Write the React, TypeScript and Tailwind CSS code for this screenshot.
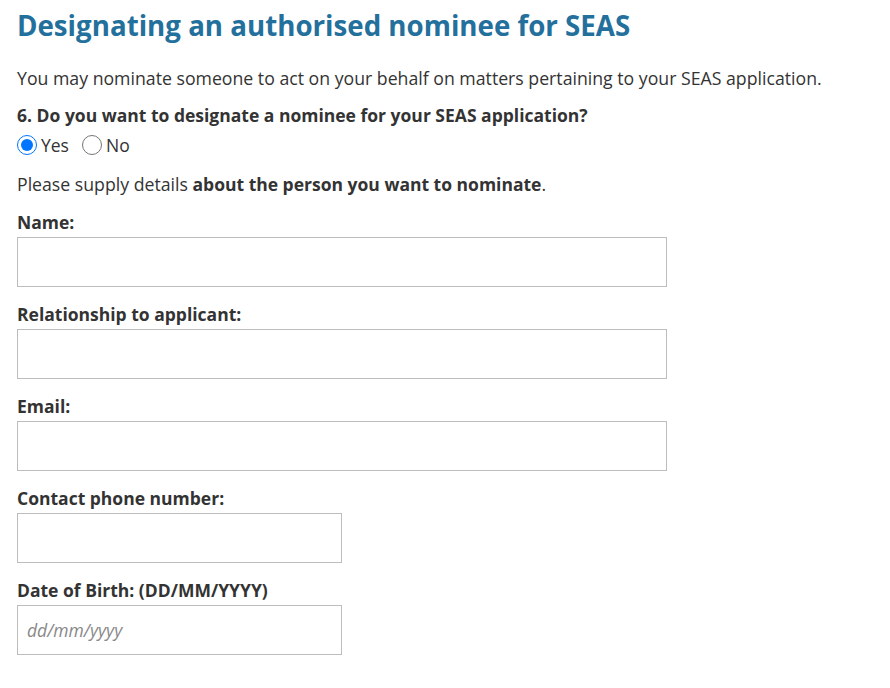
import React from "react";

const font = { fontFamily: '"Open Sans", "Noto Sans", sans-serif' };

function Field({ label, wide = true, placeholder }: { label: string; wide?: boolean; placeholder?: string }) {
  return (
    <div className="mt-[15px]">
      <label className="block text-[17.5px] font-bold leading-[24px] text-[#333]">{label}</label>
      <input
        type="text"
        placeholder={placeholder}
        className={`mt-[3px] block h-[50px] border border-[#bdbdbd] bg-white px-[9px] text-[17.5px] italic text-[#333] placeholder:text-[#888] outline-none ${wide ? "w-[650px]" : "w-[325px]"}`}
        style={font}
      />
    </div>
  );
}

export default function App() {
  return (
    <div className="min-h-[688px] w-[890px] bg-white px-[17px] pt-[6px] text-[#333]" style={font}>
      <h1 className="text-[27.7px] font-bold leading-[38px] text-[#24709d]">
        Designating an authorised nominee for SEAS
      </h1>
      <p className="mt-[21px] text-[17.7px] leading-[26px]">
        You may nominate someone to act on your behalf on matters pertaining to your SEAS application.
      </p>
      <p className="mt-[12px] text-[17.5px] font-bold leading-[24px]">
        6. Do you want to designate a nominee for your SEAS application?
      </p>
      <div className="mt-[6px] flex items-center text-[17.5px] leading-[24px]">
        <label className="flex items-center">
          <input type="radio" name="nominee" defaultChecked className="m-0 h-[20px] w-[20px]" />
          <span className="ml-[4px]">Yes</span>
        </label>
        <label className="ml-[13px] flex items-center">
          <input type="radio" name="nominee" className="m-0 h-[20px] w-[20px]" />
          <span className="ml-[4px]">No</span>
        </label>
      </div>
      <p className="mt-[15px] text-[17.7px] leading-[24px]">
        Please supply details <strong className="text-[17.5px] font-bold">about the person you want to nominate</strong>.
      </p>
      <div className="-mt-[1px]">
        <Field label="Name:" />
        <Field label="Relationship to applicant:" />
        <Field label="Email:" />
        <Field label="Contact phone number:" wide={false} />
        <Field label="Date of Birth: (DD/MM/YYYY)" wide={false} placeholder="dd/mm/yyyy" />
      </div>
    </div>
  );
}
